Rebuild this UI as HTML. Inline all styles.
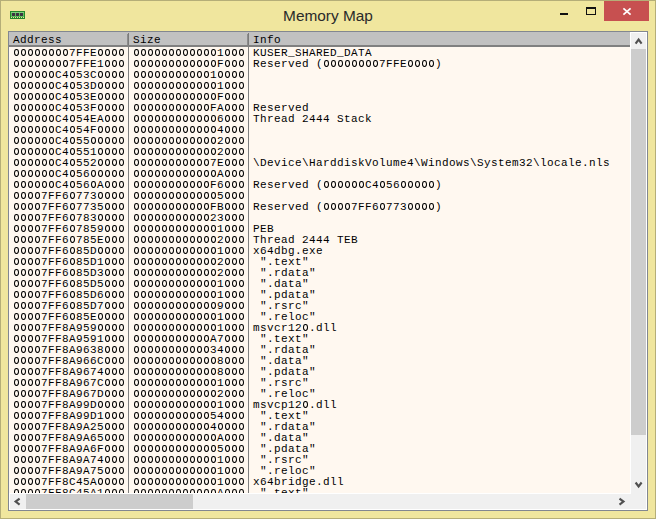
<!DOCTYPE html>
<html><head><meta charset="utf-8">
<style>
html,body{margin:0;padding:0;}
body{width:656px;height:519px;position:relative;overflow:hidden;background:#F0E69E;font-family:"Liberation Sans",sans-serif;}
.abs{position:absolute;}
#fl{left:0;top:0;width:1px;height:519px;background:#B5AE78;}
#fr{left:655px;top:0;width:1px;height:519px;background:#B5AE78;}
#ft{left:0;top:0;width:656px;height:1px;background:#B5AE78;}
#fb{left:0;top:518px;width:656px;height:1px;background:#B5AE78;}
#title{left:0;top:0.5px;width:656px;text-align:center;font-size:15.4px;line-height:30px;color:#2a2a2a;}
#min{left:560px;top:13px;width:8px;height:2px;background:#111;}
#max{left:586px;top:7px;width:8px;height:5px;border:1px solid #111;border-top-width:2px;}
#close{left:604px;top:1px;width:45px;height:20px;background:#C75050;}
#box{left:8px;top:31px;width:638px;height:478px;border:1px solid #828790;background:#fff;}
#hdr{left:9px;top:32px;width:621px;height:13px;background:#C1C1C1;}
#hdrb{left:9px;top:45px;width:621px;height:2px;background:#808080;}
.hsep{top:33px;width:1px;height:12px;background:#7a7a7a;}
#data{left:9px;top:47px;width:621px;height:446px;background:#FFF8F0;overflow:hidden;}
.vl{top:0;width:1px;height:446px;background:#808080;}
.ht{top:34px;height:13px;font-family:"Liberation Mono",monospace;font-size:11px;letter-spacing:0.4px;line-height:13px;color:#000;white-space:pre;}
.r{position:absolute;left:0;height:11px;width:621px;font-family:"Liberation Mono",monospace;font-size:11px;letter-spacing:0.4px;line-height:11px;color:#000;white-space:pre;}
.r span{position:absolute;top:1px;}
.a{left:4px;}
.z{left:124px;}
.i{left:244px;}
.s{color:#8B671F;}
.r b{font-weight:normal;display:inline-block;width:7px;position:relative;letter-spacing:0;-webkit-text-fill-color:transparent;}
.r b::before{content:"";position:absolute;left:1px;top:1px;width:2.9px;height:4.9px;border:1.05px solid currentColor;border-radius:50%;}
#vsb{left:631px;top:33px;width:15px;height:476px;background:#F0F0F0;}
#vthumb{left:631px;top:49px;width:15px;height:386px;background:#CDCDCD;}
#hsb{left:10px;top:494px;width:636px;height:15px;background:#F0F0F0;}
#hthumb{left:26px;top:494px;width:167px;height:15px;background:#CDCDCD;}
svg{position:absolute;overflow:visible;}
</style></head><body>
<div class="abs" id="fl"></div><div class="abs" id="fr"></div><div class="abs" id="ft"></div><div class="abs" id="fb"></div>
<svg style="left:10px;top:11px" width="15" height="8" viewBox="0 0 15 8" shape-rendering="crispEdges">
<rect x="0" y="0" width="15" height="8" fill="#23882a"/>
<rect x="1" y="1" width="13" height="5" fill="#5dbf5d"/>
<rect x="1" y="1" width="13" height="1" fill="#7fd07f"/>
<rect x="2" y="2" width="3" height="3" fill="#3d3442"/>
<rect x="6" y="2" width="3" height="3" fill="#3d3442"/>
<rect x="10" y="2" width="3" height="3" fill="#3d3442"/>
<rect x="1" y="6" width="1" height="1" fill="#eadf9f"/>
<rect x="3" y="6" width="1" height="1" fill="#eadf9f"/>
<rect x="5" y="6" width="1" height="1" fill="#eadf9f"/>
<rect x="7" y="6" width="1" height="1" fill="#eadf9f"/>
<rect x="9" y="6" width="1" height="1" fill="#eadf9f"/>
<rect x="11" y="6" width="1" height="1" fill="#eadf9f"/>
<rect x="13" y="6" width="1" height="1" fill="#eadf9f"/>
</svg>
<div class="abs" id="title">Memory Map</div>
<div class="abs" id="min"></div>
<div class="abs" id="max"></div>
<div class="abs" id="close"></div>
<svg style="left:623px;top:8px" width="8" height="7" viewBox="0 0 8 7"><path d="M0.4 0.3 L7.6 6.7 M7.6 0.3 L0.4 6.7" stroke="#fff" stroke-width="1.7"/></svg>
<div class="abs" id="box"></div>
<div class="abs" id="hdr"></div>
<div class="abs" id="hdrb"></div>
<div class="abs hsep" style="left:128px"></div><div class="abs hsep" style="left:127px;top:34px;height:11px;background:#8c8c8c"></div>
<div class="abs hsep" style="left:248px"></div><div class="abs hsep" style="left:247px;top:34px;height:11px;background:#8c8c8c"></div>
<div class="abs ht" style="left:13px">Address</div>
<div class="abs ht" style="left:133px">Size</div>
<div class="abs ht" style="left:253px">Info</div>
<div class="abs" id="data">
<div class="abs vl" style="left:119px"></div>
<div class="abs vl" style="left:239px"></div>
<div class="r" style="top:0px"><span class="a"><b>0</b><b>0</b><b>0</b><b>0</b><b>0</b><b>0</b><b>0</b><b>0</b>7FFE<b>0</b><b>0</b><b>0</b><b>0</b></span><span class="z"><b>0</b><b>0</b><b>0</b><b>0</b><b>0</b><b>0</b><b>0</b><b>0</b><b>0</b><b>0</b><b>0</b><b>0</b>1<b>0</b><b>0</b><b>0</b></span><span class="i">KUSER_SHARED_DATA</span></div>
<div class="r" style="top:11px"><span class="a"><b>0</b><b>0</b><b>0</b><b>0</b><b>0</b><b>0</b><b>0</b><b>0</b>7FFE1<b>0</b><b>0</b><b>0</b></span><span class="z"><b>0</b><b>0</b><b>0</b><b>0</b><b>0</b><b>0</b><b>0</b><b>0</b><b>0</b><b>0</b><b>0</b><b>0</b>F<b>0</b><b>0</b><b>0</b></span><span class="i">Reserved&nbsp;(<b>0</b><b>0</b><b>0</b><b>0</b><b>0</b><b>0</b><b>0</b><b>0</b>7FFE<b>0</b><b>0</b><b>0</b><b>0</b>)</span></div>
<div class="r" style="top:22px"><span class="a"><b>0</b><b>0</b><b>0</b><b>0</b><b>0</b><b>0</b>C4<b>0</b>53C<b>0</b><b>0</b><b>0</b><b>0</b></span><span class="z"><b>0</b><b>0</b><b>0</b><b>0</b><b>0</b><b>0</b><b>0</b><b>0</b><b>0</b><b>0</b><b>0</b>1<b>0</b><b>0</b><b>0</b><b>0</b></span><span class="i"></span></div>
<div class="r" style="top:33px"><span class="a"><b>0</b><b>0</b><b>0</b><b>0</b><b>0</b><b>0</b>C4<b>0</b>53D<b>0</b><b>0</b><b>0</b><b>0</b></span><span class="z"><b>0</b><b>0</b><b>0</b><b>0</b><b>0</b><b>0</b><b>0</b><b>0</b><b>0</b><b>0</b><b>0</b><b>0</b>1<b>0</b><b>0</b><b>0</b></span><span class="i"></span></div>
<div class="r" style="top:44px"><span class="a"><b>0</b><b>0</b><b>0</b><b>0</b><b>0</b><b>0</b>C4<b>0</b>53E<b>0</b><b>0</b><b>0</b><b>0</b></span><span class="z"><b>0</b><b>0</b><b>0</b><b>0</b><b>0</b><b>0</b><b>0</b><b>0</b><b>0</b><b>0</b><b>0</b><b>0</b>F<b>0</b><b>0</b><b>0</b></span><span class="i"></span></div>
<div class="r" style="top:55px"><span class="a"><b>0</b><b>0</b><b>0</b><b>0</b><b>0</b><b>0</b>C4<b>0</b>53F<b>0</b><b>0</b><b>0</b><b>0</b></span><span class="z"><b>0</b><b>0</b><b>0</b><b>0</b><b>0</b><b>0</b><b>0</b><b>0</b><b>0</b><b>0</b><b>0</b>FA<b>0</b><b>0</b><b>0</b></span><span class="i">Reserved</span></div>
<div class="r" style="top:66px"><span class="a"><b>0</b><b>0</b><b>0</b><b>0</b><b>0</b><b>0</b>C4<b>0</b>54EA<b>0</b><b>0</b><b>0</b></span><span class="z"><b>0</b><b>0</b><b>0</b><b>0</b><b>0</b><b>0</b><b>0</b><b>0</b><b>0</b><b>0</b><b>0</b><b>0</b>6<b>0</b><b>0</b><b>0</b></span><span class="i">Thread&nbsp;2444&nbsp;Stack</span></div>
<div class="r" style="top:77px"><span class="a"><b>0</b><b>0</b><b>0</b><b>0</b><b>0</b><b>0</b>C4<b>0</b>54F<b>0</b><b>0</b><b>0</b><b>0</b></span><span class="z"><b>0</b><b>0</b><b>0</b><b>0</b><b>0</b><b>0</b><b>0</b><b>0</b><b>0</b><b>0</b><b>0</b><b>0</b>4<b>0</b><b>0</b><b>0</b></span><span class="i"></span></div>
<div class="r" style="top:88px"><span class="a"><b>0</b><b>0</b><b>0</b><b>0</b><b>0</b><b>0</b>C4<b>0</b>55<b>0</b><b>0</b><b>0</b><b>0</b><b>0</b></span><span class="z"><b>0</b><b>0</b><b>0</b><b>0</b><b>0</b><b>0</b><b>0</b><b>0</b><b>0</b><b>0</b><b>0</b><b>0</b>2<b>0</b><b>0</b><b>0</b></span><span class="i"></span></div>
<div class="r" style="top:99px"><span class="a"><b>0</b><b>0</b><b>0</b><b>0</b><b>0</b><b>0</b>C4<b>0</b>551<b>0</b><b>0</b><b>0</b><b>0</b></span><span class="z"><b>0</b><b>0</b><b>0</b><b>0</b><b>0</b><b>0</b><b>0</b><b>0</b><b>0</b><b>0</b><b>0</b><b>0</b>2<b>0</b><b>0</b><b>0</b></span><span class="i"></span></div>
<div class="r" style="top:110px"><span class="a"><b>0</b><b>0</b><b>0</b><b>0</b><b>0</b><b>0</b>C4<b>0</b>552<b>0</b><b>0</b><b>0</b><b>0</b></span><span class="z"><b>0</b><b>0</b><b>0</b><b>0</b><b>0</b><b>0</b><b>0</b><b>0</b><b>0</b><b>0</b><b>0</b>7E<b>0</b><b>0</b><b>0</b></span><span class="i">\Device\HarddiskVolume4\Windows\System32\locale.nls</span></div>
<div class="r" style="top:121px"><span class="a"><b>0</b><b>0</b><b>0</b><b>0</b><b>0</b><b>0</b>C4<b>0</b>56<b>0</b><b>0</b><b>0</b><b>0</b><b>0</b></span><span class="z"><b>0</b><b>0</b><b>0</b><b>0</b><b>0</b><b>0</b><b>0</b><b>0</b><b>0</b><b>0</b><b>0</b><b>0</b>A<b>0</b><b>0</b><b>0</b></span><span class="i"></span></div>
<div class="r" style="top:132px"><span class="a"><b>0</b><b>0</b><b>0</b><b>0</b><b>0</b><b>0</b>C4<b>0</b>56<b>0</b>A<b>0</b><b>0</b><b>0</b></span><span class="z"><b>0</b><b>0</b><b>0</b><b>0</b><b>0</b><b>0</b><b>0</b><b>0</b><b>0</b><b>0</b><b>0</b>F6<b>0</b><b>0</b><b>0</b></span><span class="i">Reserved&nbsp;(<b>0</b><b>0</b><b>0</b><b>0</b><b>0</b><b>0</b>C4<b>0</b>56<b>0</b><b>0</b><b>0</b><b>0</b><b>0</b>)</span></div>
<div class="r" style="top:143px"><span class="a"><b>0</b><b>0</b><b>0</b><b>0</b>7FF6<b>0</b>773<b>0</b><b>0</b><b>0</b><b>0</b></span><span class="z"><b>0</b><b>0</b><b>0</b><b>0</b><b>0</b><b>0</b><b>0</b><b>0</b><b>0</b><b>0</b><b>0</b><b>0</b>5<b>0</b><b>0</b><b>0</b></span><span class="i"></span></div>
<div class="r" style="top:154px"><span class="a"><b>0</b><b>0</b><b>0</b><b>0</b>7FF6<b>0</b>7735<b>0</b><b>0</b><b>0</b></span><span class="z"><b>0</b><b>0</b><b>0</b><b>0</b><b>0</b><b>0</b><b>0</b><b>0</b><b>0</b><b>0</b><b>0</b>FB<b>0</b><b>0</b><b>0</b></span><span class="i">Reserved&nbsp;(<b>0</b><b>0</b><b>0</b><b>0</b>7FF6<b>0</b>773<b>0</b><b>0</b><b>0</b><b>0</b>)</span></div>
<div class="r" style="top:165px"><span class="a"><b>0</b><b>0</b><b>0</b><b>0</b>7FF6<b>0</b>783<b>0</b><b>0</b><b>0</b><b>0</b></span><span class="z"><b>0</b><b>0</b><b>0</b><b>0</b><b>0</b><b>0</b><b>0</b><b>0</b><b>0</b><b>0</b><b>0</b>23<b>0</b><b>0</b><b>0</b></span><span class="i"></span></div>
<div class="r" style="top:176px"><span class="a"><b>0</b><b>0</b><b>0</b><b>0</b>7FF6<b>0</b>7859<b>0</b><b>0</b><b>0</b></span><span class="z"><b>0</b><b>0</b><b>0</b><b>0</b><b>0</b><b>0</b><b>0</b><b>0</b><b>0</b><b>0</b><b>0</b><b>0</b>1<b>0</b><b>0</b><b>0</b></span><span class="i">PEB</span></div>
<div class="r" style="top:187px"><span class="a"><b>0</b><b>0</b><b>0</b><b>0</b>7FF6<b>0</b>785E<b>0</b><b>0</b><b>0</b></span><span class="z"><b>0</b><b>0</b><b>0</b><b>0</b><b>0</b><b>0</b><b>0</b><b>0</b><b>0</b><b>0</b><b>0</b><b>0</b>2<b>0</b><b>0</b><b>0</b></span><span class="i">Thread&nbsp;2444&nbsp;TEB</span></div>
<div class="r" style="top:198px"><span class="a"><b>0</b><b>0</b><b>0</b><b>0</b>7FF6<b>0</b>85D<b>0</b><b>0</b><b>0</b><b>0</b></span><span class="z"><b>0</b><b>0</b><b>0</b><b>0</b><b>0</b><b>0</b><b>0</b><b>0</b><b>0</b><b>0</b><b>0</b><b>0</b>1<b>0</b><b>0</b><b>0</b></span><span class="i">x64dbg.exe</span></div>
<div class="r" style="top:209px"><span class="a"><b>0</b><b>0</b><b>0</b><b>0</b>7FF6<b>0</b>85D1<b>0</b><b>0</b><b>0</b></span><span class="z"><b>0</b><b>0</b><b>0</b><b>0</b><b>0</b><b>0</b><b>0</b><b>0</b><b>0</b><b>0</b><b>0</b><b>0</b>2<b>0</b><b>0</b><b>0</b></span><span class="i" class="s">&nbsp;&quot;.text&quot;</span></div>
<div class="r" style="top:220px"><span class="a"><b>0</b><b>0</b><b>0</b><b>0</b>7FF6<b>0</b>85D3<b>0</b><b>0</b><b>0</b></span><span class="z"><b>0</b><b>0</b><b>0</b><b>0</b><b>0</b><b>0</b><b>0</b><b>0</b><b>0</b><b>0</b><b>0</b><b>0</b>2<b>0</b><b>0</b><b>0</b></span><span class="i" class="s">&nbsp;&quot;.rdata&quot;</span></div>
<div class="r" style="top:231px"><span class="a"><b>0</b><b>0</b><b>0</b><b>0</b>7FF6<b>0</b>85D5<b>0</b><b>0</b><b>0</b></span><span class="z"><b>0</b><b>0</b><b>0</b><b>0</b><b>0</b><b>0</b><b>0</b><b>0</b><b>0</b><b>0</b><b>0</b><b>0</b>1<b>0</b><b>0</b><b>0</b></span><span class="i" class="s">&nbsp;&quot;.data&quot;</span></div>
<div class="r" style="top:242px"><span class="a"><b>0</b><b>0</b><b>0</b><b>0</b>7FF6<b>0</b>85D6<b>0</b><b>0</b><b>0</b></span><span class="z"><b>0</b><b>0</b><b>0</b><b>0</b><b>0</b><b>0</b><b>0</b><b>0</b><b>0</b><b>0</b><b>0</b><b>0</b>1<b>0</b><b>0</b><b>0</b></span><span class="i" class="s">&nbsp;&quot;.pdata&quot;</span></div>
<div class="r" style="top:253px"><span class="a"><b>0</b><b>0</b><b>0</b><b>0</b>7FF6<b>0</b>85D7<b>0</b><b>0</b><b>0</b></span><span class="z"><b>0</b><b>0</b><b>0</b><b>0</b><b>0</b><b>0</b><b>0</b><b>0</b><b>0</b><b>0</b><b>0</b><b>0</b>9<b>0</b><b>0</b><b>0</b></span><span class="i" class="s">&nbsp;&quot;.rsrc&quot;</span></div>
<div class="r" style="top:264px"><span class="a"><b>0</b><b>0</b><b>0</b><b>0</b>7FF6<b>0</b>85E<b>0</b><b>0</b><b>0</b><b>0</b></span><span class="z"><b>0</b><b>0</b><b>0</b><b>0</b><b>0</b><b>0</b><b>0</b><b>0</b><b>0</b><b>0</b><b>0</b><b>0</b>1<b>0</b><b>0</b><b>0</b></span><span class="i" class="s">&nbsp;&quot;.reloc&quot;</span></div>
<div class="r" style="top:275px"><span class="a"><b>0</b><b>0</b><b>0</b><b>0</b>7FF8A959<b>0</b><b>0</b><b>0</b><b>0</b></span><span class="z"><b>0</b><b>0</b><b>0</b><b>0</b><b>0</b><b>0</b><b>0</b><b>0</b><b>0</b><b>0</b><b>0</b><b>0</b>1<b>0</b><b>0</b><b>0</b></span><span class="i">msvcr12<b>0</b>.dll</span></div>
<div class="r" style="top:286px"><span class="a"><b>0</b><b>0</b><b>0</b><b>0</b>7FF8A9591<b>0</b><b>0</b><b>0</b></span><span class="z"><b>0</b><b>0</b><b>0</b><b>0</b><b>0</b><b>0</b><b>0</b><b>0</b><b>0</b><b>0</b><b>0</b>A7<b>0</b><b>0</b><b>0</b></span><span class="i" class="s">&nbsp;&quot;.text&quot;</span></div>
<div class="r" style="top:297px"><span class="a"><b>0</b><b>0</b><b>0</b><b>0</b>7FF8A9638<b>0</b><b>0</b><b>0</b></span><span class="z"><b>0</b><b>0</b><b>0</b><b>0</b><b>0</b><b>0</b><b>0</b><b>0</b><b>0</b><b>0</b><b>0</b>34<b>0</b><b>0</b><b>0</b></span><span class="i" class="s">&nbsp;&quot;.rdata&quot;</span></div>
<div class="r" style="top:308px"><span class="a"><b>0</b><b>0</b><b>0</b><b>0</b>7FF8A966C<b>0</b><b>0</b><b>0</b></span><span class="z"><b>0</b><b>0</b><b>0</b><b>0</b><b>0</b><b>0</b><b>0</b><b>0</b><b>0</b><b>0</b><b>0</b><b>0</b>8<b>0</b><b>0</b><b>0</b></span><span class="i" class="s">&nbsp;&quot;.data&quot;</span></div>
<div class="r" style="top:319px"><span class="a"><b>0</b><b>0</b><b>0</b><b>0</b>7FF8A9674<b>0</b><b>0</b><b>0</b></span><span class="z"><b>0</b><b>0</b><b>0</b><b>0</b><b>0</b><b>0</b><b>0</b><b>0</b><b>0</b><b>0</b><b>0</b><b>0</b>8<b>0</b><b>0</b><b>0</b></span><span class="i" class="s">&nbsp;&quot;.pdata&quot;</span></div>
<div class="r" style="top:330px"><span class="a"><b>0</b><b>0</b><b>0</b><b>0</b>7FF8A967C<b>0</b><b>0</b><b>0</b></span><span class="z"><b>0</b><b>0</b><b>0</b><b>0</b><b>0</b><b>0</b><b>0</b><b>0</b><b>0</b><b>0</b><b>0</b><b>0</b>1<b>0</b><b>0</b><b>0</b></span><span class="i" class="s">&nbsp;&quot;.rsrc&quot;</span></div>
<div class="r" style="top:341px"><span class="a"><b>0</b><b>0</b><b>0</b><b>0</b>7FF8A967D<b>0</b><b>0</b><b>0</b></span><span class="z"><b>0</b><b>0</b><b>0</b><b>0</b><b>0</b><b>0</b><b>0</b><b>0</b><b>0</b><b>0</b><b>0</b><b>0</b>2<b>0</b><b>0</b><b>0</b></span><span class="i" class="s">&nbsp;&quot;.reloc&quot;</span></div>
<div class="r" style="top:352px"><span class="a"><b>0</b><b>0</b><b>0</b><b>0</b>7FF8A99D<b>0</b><b>0</b><b>0</b><b>0</b></span><span class="z"><b>0</b><b>0</b><b>0</b><b>0</b><b>0</b><b>0</b><b>0</b><b>0</b><b>0</b><b>0</b><b>0</b><b>0</b>1<b>0</b><b>0</b><b>0</b></span><span class="i">msvcp12<b>0</b>.dll</span></div>
<div class="r" style="top:363px"><span class="a"><b>0</b><b>0</b><b>0</b><b>0</b>7FF8A99D1<b>0</b><b>0</b><b>0</b></span><span class="z"><b>0</b><b>0</b><b>0</b><b>0</b><b>0</b><b>0</b><b>0</b><b>0</b><b>0</b><b>0</b><b>0</b>54<b>0</b><b>0</b><b>0</b></span><span class="i" class="s">&nbsp;&quot;.text&quot;</span></div>
<div class="r" style="top:374px"><span class="a"><b>0</b><b>0</b><b>0</b><b>0</b>7FF8A9A25<b>0</b><b>0</b><b>0</b></span><span class="z"><b>0</b><b>0</b><b>0</b><b>0</b><b>0</b><b>0</b><b>0</b><b>0</b><b>0</b><b>0</b><b>0</b>4<b>0</b><b>0</b><b>0</b><b>0</b></span><span class="i" class="s">&nbsp;&quot;.rdata&quot;</span></div>
<div class="r" style="top:385px"><span class="a"><b>0</b><b>0</b><b>0</b><b>0</b>7FF8A9A65<b>0</b><b>0</b><b>0</b></span><span class="z"><b>0</b><b>0</b><b>0</b><b>0</b><b>0</b><b>0</b><b>0</b><b>0</b><b>0</b><b>0</b><b>0</b><b>0</b>A<b>0</b><b>0</b><b>0</b></span><span class="i" class="s">&nbsp;&quot;.data&quot;</span></div>
<div class="r" style="top:396px"><span class="a"><b>0</b><b>0</b><b>0</b><b>0</b>7FF8A9A6F<b>0</b><b>0</b><b>0</b></span><span class="z"><b>0</b><b>0</b><b>0</b><b>0</b><b>0</b><b>0</b><b>0</b><b>0</b><b>0</b><b>0</b><b>0</b><b>0</b>5<b>0</b><b>0</b><b>0</b></span><span class="i" class="s">&nbsp;&quot;.pdata&quot;</span></div>
<div class="r" style="top:407px"><span class="a"><b>0</b><b>0</b><b>0</b><b>0</b>7FF8A9A74<b>0</b><b>0</b><b>0</b></span><span class="z"><b>0</b><b>0</b><b>0</b><b>0</b><b>0</b><b>0</b><b>0</b><b>0</b><b>0</b><b>0</b><b>0</b><b>0</b>1<b>0</b><b>0</b><b>0</b></span><span class="i" class="s">&nbsp;&quot;.rsrc&quot;</span></div>
<div class="r" style="top:418px"><span class="a"><b>0</b><b>0</b><b>0</b><b>0</b>7FF8A9A75<b>0</b><b>0</b><b>0</b></span><span class="z"><b>0</b><b>0</b><b>0</b><b>0</b><b>0</b><b>0</b><b>0</b><b>0</b><b>0</b><b>0</b><b>0</b><b>0</b>1<b>0</b><b>0</b><b>0</b></span><span class="i" class="s">&nbsp;&quot;.reloc&quot;</span></div>
<div class="r" style="top:429px"><span class="a"><b>0</b><b>0</b><b>0</b><b>0</b>7FF8C45A<b>0</b><b>0</b><b>0</b><b>0</b></span><span class="z"><b>0</b><b>0</b><b>0</b><b>0</b><b>0</b><b>0</b><b>0</b><b>0</b><b>0</b><b>0</b><b>0</b><b>0</b>1<b>0</b><b>0</b><b>0</b></span><span class="i">x64bridge.dll</span></div>
<div class="r" style="top:440px"><span class="a"><b>0</b><b>0</b><b>0</b><b>0</b>7FF8C45A1<b>0</b><b>0</b><b>0</b></span><span class="z"><b>0</b><b>0</b><b>0</b><b>0</b><b>0</b><b>0</b><b>0</b><b>0</b><b>0</b><b>0</b><b>0</b><b>0</b>A<b>0</b><b>0</b><b>0</b></span><span class="i" class="s">&nbsp;&quot;.text&quot;</span></div>
</div>
<div class="abs" id="vsb"></div>
<div class="abs" id="vthumb"></div>
<div class="abs" id="hsb"></div>
<div class="abs" id="hthumb"></div>
<svg style="left:634px;top:37px" width="10" height="9" viewBox="0 0 10 9"><path d="M1.6 6.6 L4.6 2.6 L7.6 6.6" fill="none" stroke="#505050" stroke-width="2.1"/></svg>
<svg style="left:634px;top:481px" width="10" height="9" viewBox="0 0 10 9"><path d="M1.6 1.5 L4.6 5.5 L7.6 1.5" fill="none" stroke="#505050" stroke-width="2.1"/></svg>
<svg style="left:13px;top:497px" width="9" height="10" viewBox="0 0 9 10"><path d="M6.6 1.6 L2.6 4.6 L6.6 7.6" fill="none" stroke="#505050" stroke-width="2.1"/></svg>
<svg style="left:618px;top:497px" width="9" height="10" viewBox="0 0 9 10"><path d="M1.5 1.6 L5.5 4.6 L1.5 7.6" fill="none" stroke="#505050" stroke-width="2.1"/></svg>
</body></html>
